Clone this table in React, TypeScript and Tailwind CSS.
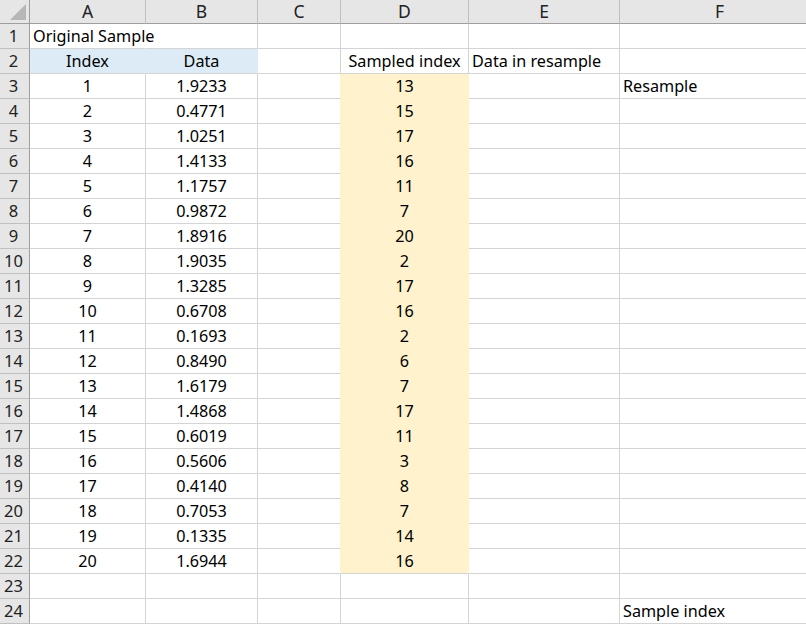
import React from "react";

const colW = ["w-[116px]", "w-[112px]", "w-[83px]", "w-[128px]", "w-[151px]", "w-[200px]"];
const letters = ["A", "B", "C", "D", "E", "F"];

const data = [
  "1.9233", "0.4771", "1.0251", "1.4133", "1.1757", "0.9872", "1.8916", "1.9035", "1.3285", "0.6708",
  "0.1693", "0.8490", "1.6179", "1.4868", "0.6019", "0.5606", "0.4140", "0.7053", "0.1335", "1.6944",
];
const sampled = [13, 15, 17, 16, 11, 7, 20, 2, 17, 16, 2, 6, 7, 17, 11, 3, 8, 7, 14, 16];

type CellSpec = {
  text?: string | number;
  center?: boolean;
  bg: string;
  br: string;
  bb: string;
};

function cellFor(r: number, c: number): CellSpec {
  const cell: CellSpec = { bg: "bg-white", br: "border-r-[#d4d4d4]", bb: "border-b-[#d4d4d4]" };
  if (r === 1 && c === 0) {
    cell.text = "Original Sample";
    cell.br = "border-r-white";
  }
  if (r === 2) {
    if (c === 0) Object.assign(cell, { text: "Index", center: true, bg: "bg-[#ddebf7]", br: "border-r-[#ddebf7]" });
    if (c === 1) Object.assign(cell, { text: "Data", center: true, bg: "bg-[#ddebf7]", br: "border-r-[#ddebf7]" });
    if (c === 3) Object.assign(cell, { text: "Sampled index", center: true });
    if (c === 4) cell.text = "Data in resample";
  }
  if (r >= 3 && r <= 22) {
    const i = r - 3;
    if (c === 0) Object.assign(cell, { text: i + 1, center: true });
    if (c === 1) Object.assign(cell, { text: data[i], center: true });
    if (c === 2) cell.br = "border-r-[#fff2cc]";
    if (c === 3)
      Object.assign(cell, {
        text: sampled[i],
        center: true,
        bg: "bg-[#fff2cc]",
        br: "border-r-[#fff2cc]",
        bb: r < 22 ? "border-b-[#fff2cc]" : "border-b-[#d4d4d4]",
      });
  }
  if (r === 3 && c === 5) cell.text = "Resample";
  if (r === 24 && c === 5) cell.text = "Sample index";
  return cell;
}

export default function App() {
  const rows = Array.from({ length: 24 }, (_, i) => i + 1);
  return (
    <div
      className="w-[806px] h-[624px] overflow-hidden bg-white text-[16.2px] text-black"
      style={{ fontFamily: '"Noto Sans", "Noto Sans CJK KR", sans-serif' }}
    >
      {/* column headers */}
      <div className="flex h-[24px]">
        <div className="relative w-[30px] shrink-0 bg-[#e6e6e6] border-r border-b border-[#9e9e9e]">
          <svg className="absolute right-[3px] bottom-[3px]" width="16" height="16" viewBox="0 0 16 16">
            <polygon points="16,0 16,16 0,16" fill="#b7b7b7" />
          </svg>
        </div>
        {letters.map((l, c) => (
          <div
            key={l}
            className={`${colW[c]} shrink-0 bg-[#e6e6e6] border-r border-r-[#c0c0c0] border-b border-b-[#9e9e9e] flex items-center justify-center text-[#222] text-[17.5px] leading-none`}
          >
            {l}
          </div>
        ))}
      </div>

      {rows.map((r) => (
        <div key={r} className="flex h-[25px]">
          <div className="w-[30px] shrink-0 bg-[#e6e6e6] border-r border-r-[#9e9e9e] border-b border-b-[#c0c0c0] flex items-center justify-center pr-[2px] text-[#222] text-[16.5px] leading-none">
            {r}
          </div>
          {letters.map((_, c) => {
            const s = cellFor(r, c);
            return (
              <div
                key={c}
                className={`${colW[c]} shrink-0 border-r border-b ${s.bg} ${s.br} ${s.bb} flex items-center whitespace-nowrap leading-none ${
                  s.center ? "justify-center" : "justify-start pl-[3px]"
                } ${r === 1 && c === 0 ? "overflow-visible relative z-10" : "overflow-hidden"}`}
              >
                {s.text}
              </div>
            );
          })}
        </div>
      ))}
    </div>
  );
}
